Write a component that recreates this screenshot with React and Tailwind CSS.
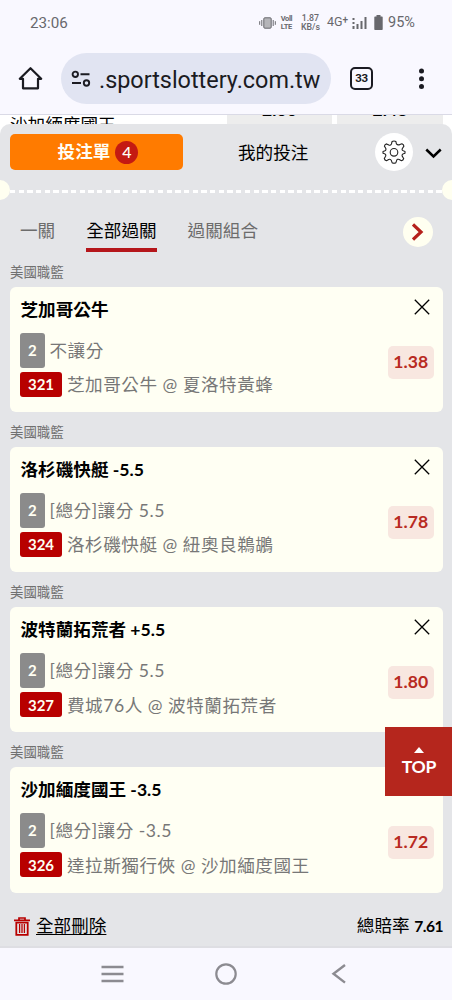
const bets = [
  { no: "321", team: "芝加哥公牛", type: "不讓分", game: "芝加哥公牛 @ 夏洛特黃蜂", odds: "1.38" },
  { no: "324", team: "洛杉磯快艇 -5.5", type: "[總分]讓分 5.5", game: "洛杉磯快艇 @ 紐奧良鵜鶘", odds: "1.78" },
  { no: "327", team: "波特蘭拓荒者 +5.5", type: "[總分]讓分 5.5", game: "費城76人 @ 波特蘭拓荒者", odds: "1.80" },
  { no: "326", team: "沙加緬度國王 -3.5", type: "[總分]讓分 -3.5", game: "達拉斯獨行俠 @ 沙加緬度國王", odds: "1.72" },
];

function StatusBar() {
  return (
    <div className="flex h-11 items-center justify-between pl-[30px] pr-9 font-[Roboto,sans-serif] text-[#68686d]">
      <span className="mt-0.5 text-[15.2px]">23:06</span>
      <div className="mt-px flex items-center">
        <svg width="17" height="14" viewBox="0 0 17 14" fill="none" stroke="currentColor">
          <rect x="4.8" y="1.8" width="7.4" height="10.4" rx="1" fill="#b5b5b9" />
          <path d="M2.8 4v6M.7 5.2v3.6M14.2 4v6M16.3 5.2v3.6" />
        </svg>
        <div className="ml-1 w-[13px] whitespace-nowrap text-center text-[7.5px] font-bold leading-[7.5px]">
          <div className="tracking-tighter">Voll</div>
          <div className="tracking-tight">LTE</div>
        </div>
        <div className="ml-2 w-[19px] text-center text-[8.8px] font-medium leading-[8.5px]">
          <div>1.87</div>
          <div>KB/s</div>
        </div>
        <span className="ml-[7px] text-[12.5px] leading-none">4G<span className="relative -top-[3px] text-[10px] font-medium">+</span></span>
        <svg className="ml-1" width="15" height="14" viewBox="0 0 15 14" fill="currentColor">
          <path d="M.5 2h2v2h-2zM.5 6h2v2h-2zM.5 10h2v3h-2zM4.5 8h2v5h-2zM8.5 5h2v8h-2zM12.5 1h2v12h-2z" />
        </svg>
        <svg className="ml-[7px]" width="9" height="15" viewBox="0 0 9 15" fill="currentColor">
          <path d="M2.5 0h4v1.5H8a.7.7 0 0 1 .7.7v12a.7.7 0 0 1-.7.7H1a.7.7 0 0 1-.7-.7v-12A.7.7 0 0 1 1 1.5h1.5z" />
        </svg>
        <span className="ml-[5px] w-[28px] whitespace-nowrap text-[14.5px]">95%</span>
      </div>
    </div>
  );
}

function AddressBar() {
  return (
    <div className="flex h-[71px] border-b border-[#dadae6] pt-[9px] text-[#1b1b22]">
      <svg className="ml-[18px] mt-[13px] shrink-0" width="25" height="25" viewBox="0 0 25 25" fill="none" stroke="currentColor" strokeWidth="2.2" strokeLinejoin="round">
        <path d="M1.8 12.8 12.5 2.2l10.7 10.6H20v9.5H5v-9.5z" />
      </svg>
      <div className="ml-[18px] flex h-[51px] w-[270px] shrink-0 items-center rounded-full bg-[#e1e4f2]">
        <svg className="ml-2.5 shrink-0" width="20" height="18" viewBox="0 0 20 18" fill="none" stroke="currentColor" strokeWidth="1.9">
          <circle cx="4.3" cy="4.3" r="2.7" />
          <path d="M9.5 4.3h9M1 13h9" />
          <circle cx="15.5" cy="13" r="2.7" />
        </svg>
        <span className="ml-2 mt-1 whitespace-nowrap font-[Roboto,sans-serif] text-[23.4px]">.sportslottery.com.tw</span>
      </div>
      <div className="ml-[19px] mt-[14px] flex h-[23px] w-[23px] shrink-0 items-center justify-center rounded-[5px] border-2 border-current font-['Roboto'] text-[11.5px] font-bold leading-none tracking-[-0.3px]">33</div>
      <svg className="ml-[45px] mt-[15px] shrink-0" width="7" height="22" viewBox="0 0 7 22" fill="currentColor">
        <circle cx="3.5" cy="3" r="2.5" />
        <circle cx="3.5" cy="10.7" r="2.5" />
        <circle cx="3.5" cy="18.4" r="2.5" />
      </svg>
    </div>
  );
}

// sliver of the page that stays visible above the bet slip
function PageBehind() {
  return (
    <div className="flex h-[19px] bg-white">
      <div className="w-[227px] pl-2.5 pt-px text-[17.6px] leading-[18px] text-black">沙加緬度國王</div>
      <div className="flex h-[19px] w-[105px] justify-center overflow-hidden bg-[#ededed]">
        <span className="-mt-[14px] text-[17.6px] font-bold leading-[18px]">2.06</span>
      </div>
      <div className="ml-[5px] flex h-[19px] w-[106px] justify-center overflow-hidden bg-[#ededed]">
        <span className="-mt-[14px] text-[17.6px] font-bold leading-[18px]">2.48</span>
      </div>
    </div>
  );
}

function SlipHeader() {
  return (
    <div className="flex h-[66px] items-start pt-[10px]">
      <div className="ml-2.5 flex h-9 w-[173px] items-center justify-center rounded-[5px] bg-[#ff7b00] pl-[3px] text-[17.6px] font-bold text-[#fffef5]">
        投注單
        <span className="ml-[5px] flex h-[23px] w-[23px] items-center justify-center rounded-full bg-[#c41a12] text-[16px] font-medium">4</span>
      </div>
      <div className="ml-[55px] mt-[1px] leading-9 text-[17.6px] text-black">我的投注</div>
      <div className="-mt-[1px] ml-[67px] flex h-[38px] w-[38px] items-center justify-center rounded-full bg-white">
        <svg width="24" height="24" viewBox="0 0 24 24" fill="none" stroke="#222" strokeWidth="1.1" strokeLinejoin="round">
          <path d="M10.1 1.5Q12 .4 13.9 1.5l.5 2.4q1.5 1.7 3.5.6l2-.8q1.7.7 2 2.4l-1.7 2.7q-.5 1.8 1.6 2.2l1.2.4v1.9l-1.5.5q-2 .8-1.2 2.6l1.4 2.1q-.5 1.8-2.2 2.2l-2.3-1.3q-1.9-.7-2.6 1.2l-.7 2.1q-1.9 1-3.8 0l-.7-2.1q-.9-1.8-2.7-1.1l-2.2 1.2q-1.8-.5-2.2-2.2l1.3-2.2q.7-1.9-1.1-2.5L1 13.3v-1.9l1.5-.5q2-.7 1.2-2.6L2.4 6.1q.4-1.8 2.2-2.2l2.2 1.2q1.8.7 2.6-1.1z" />
          <circle cx="12" cy="12.3" r="3.8" />
        </svg>
      </div>
      <svg className="ml-[12px] mt-[14px]" width="17" height="11" viewBox="0 0 17 11" fill="none" stroke="#000" strokeWidth="2.5">
        <path d="M1.3 1.5 8.5 8.5l7.2-7" />
      </svg>
    </div>
  );
}

function Divider() {
  return (
    <div className="flex h-0 items-center">
      <div className="-ml-2.5 h-5 w-5 shrink-0 rounded-full bg-[#fffff0]" />
      <div className="mt-[3px] h-[2.5px] flex-1 bg-[repeating-linear-gradient(90deg,#fff_0_5.3px,transparent_5.3px_8.7px)]" />
      <div className="-mr-2.5 h-5 w-5 shrink-0 rounded-full bg-[#fffff0]" />
    </div>
  );
}

function Tabs() {
  return (
    <div className="flex h-[62px] pl-5 pt-[27px] text-[17.6px] leading-[28px] text-[#6c6c6c]">
      <span>一關</span>
      <span className="ml-[31px] h-[35px] border-b-4 border-[#b5161b] text-black">全部過關</span>
      <span className="ml-[31px]">過關組合</span>
      <div className="ml-[145px] flex h-[30px] w-[30px] items-center justify-center rounded-full bg-[#fffff0]">
        <svg width="12" height="18" viewBox="0 0 12 18" fill="none" stroke="#b5201b" strokeWidth="3.2">
          <path d="m1 1.5 8 7.5-8 7.5" />
        </svg>
      </div>
    </div>
  );
}

function BetCard({ bet }) {
  return (
    <section className="h-[160.15px] pl-2.5 pr-[9px]">
      <div className="h-[35px] pt-[10px] text-[13.4px] leading-[20px] text-[#707070]">美國職籃</div>
      <div className="flex h-[125.15px] justify-between rounded-md bg-[#fffff3] pl-2.5 pr-[9.5px]">
        <div>
          <div className="mt-[11px] h-[34.5px] pl-[0.5px] leading-[24px] text-[17.6px] font-bold text-black">{bet.team}</div>
          <div className="flex h-[35px] items-center text-[17.6px] tracking-[0.52px] text-[#777]">
            <span className="mr-[5px] flex h-[35px] w-[24.5px] items-center justify-center rounded-[3px] bg-[#8b8b8b] text-[15px] font-bold tracking-normal text-[#fffff3]">2</span>
            <span className="mt-0.5">{bet.type}</span>
          </div>
          <div className="mt-[4.5px] flex h-[25px] items-center text-[17.6px] tracking-[0.52px] text-[#777]">
            <span className="mr-[5px] flex h-[25px] w-[42px] items-center justify-center rounded-[3px] bg-[#b80000] text-[15px] font-bold tracking-normal text-[#fffff3]">{bet.no}</span>
            <span className="mt-0.5">{bet.game}</span>
          </div>
        </div>
        <div className="flex flex-col items-end">
          <svg className="mr-1 mt-3" width="16" height="16" viewBox="0 0 16 16" stroke="#000" strokeWidth="1.3">
            <path d="m.8.8 14.4 14.4M15.2.8.8 15.2" />
          </svg>
          <div className="mt-[30.5px] flex h-[33px] w-[45.5px] items-center justify-center rounded-[5px] bg-[#f8e7e0] text-[17.6px] font-bold text-[#b82a22]">{bet.odds}</div>
        </div>
      </div>
    </section>
  );
}

function SlipFooter() {
  return (
    <div className="flex h-[56px] items-center justify-between border-b-2 border-[#dedee3] pl-3.5 pr-[9px] pt-4 text-[17.6px] text-black">
      <div className="flex items-center">
        <svg width="16" height="19" viewBox="0 0 16 19" fill="none" stroke="#b80000">
          <path d="M0 3.4h16M5 3V1h6v2" strokeWidth="1.7" />
          <path d="M2.3 5.7h11.4v12.2H2.3z" strokeWidth="1.8" />
          <path d="M5.6 7v9M8 7v9M10.4 7v9" strokeWidth="1.3" />
        </svg>
        <span className="ml-1.5 underline decoration-1 underline-offset-2">全部刪除</span>
      </div>
      <div>總賠率 <span className="text-[15.6px] font-bold tracking-[-0.5px]">7.61</span></div>
    </div>
  );
}

function NavBar() {
  return (
    <div className="flex h-[52px] items-center justify-center gap-[91px] bg-[#f9f8ff] pr-0.5 text-[#8c8b91]">
      <svg width="23" height="20" viewBox="0 0 23 20" stroke="currentColor" strokeWidth="2.4">
        <path d="M.5 3h22M.5 10h22M.5 17h22" />
      </svg>
      <svg width="22" height="22" viewBox="0 0 22 22" fill="none" stroke="currentColor" strokeWidth="2.2">
        <circle cx="11" cy="11" r="9.7" />
      </svg>
      <svg width="22" height="20" viewBox="0 0 22 20" fill="none" stroke="currentColor" strokeWidth="2.4">
        <path d="M17 1 5.5 9.8 17 18.6" />
      </svg>
    </div>
  );
}

export default function App() {
  return (
    <div className="relative h-[1000px] w-[452px] overflow-hidden bg-[#f9f8ff] font-[Lato,'Noto_Sans_CJK_TC',sans-serif]">
      <StatusBar />
      <AddressBar />
      <PageBehind />
      <main className="relative -mt-2.5 h-[824px] overflow-hidden rounded-t-[10px] bg-[#e4e5e8]">
        <SlipHeader />
        <Divider />
        <Tabs />
        {bets.map((bet) => <BetCard key={bet.no} bet={bet} />)}
        <div className="-mt-[1px]"><SlipFooter /></div>
      </main>
      <NavBar />

      {/* Back to top */}
      <button className="absolute right-0 top-[727px] flex h-[69px] w-[67px] flex-col items-center bg-[#b5261d] pt-5 text-[17.6px] font-bold text-white">
        <svg width="10" height="6" viewBox="0 0 10 6" fill="currentColor">
          <path d="M5 0l5 6H0z" />
        </svg>
        <span className="mt-0.5 pl-px leading-6 tracking-[-0.2px]">TOP</span>
      </button>
    </div>
  );
}
